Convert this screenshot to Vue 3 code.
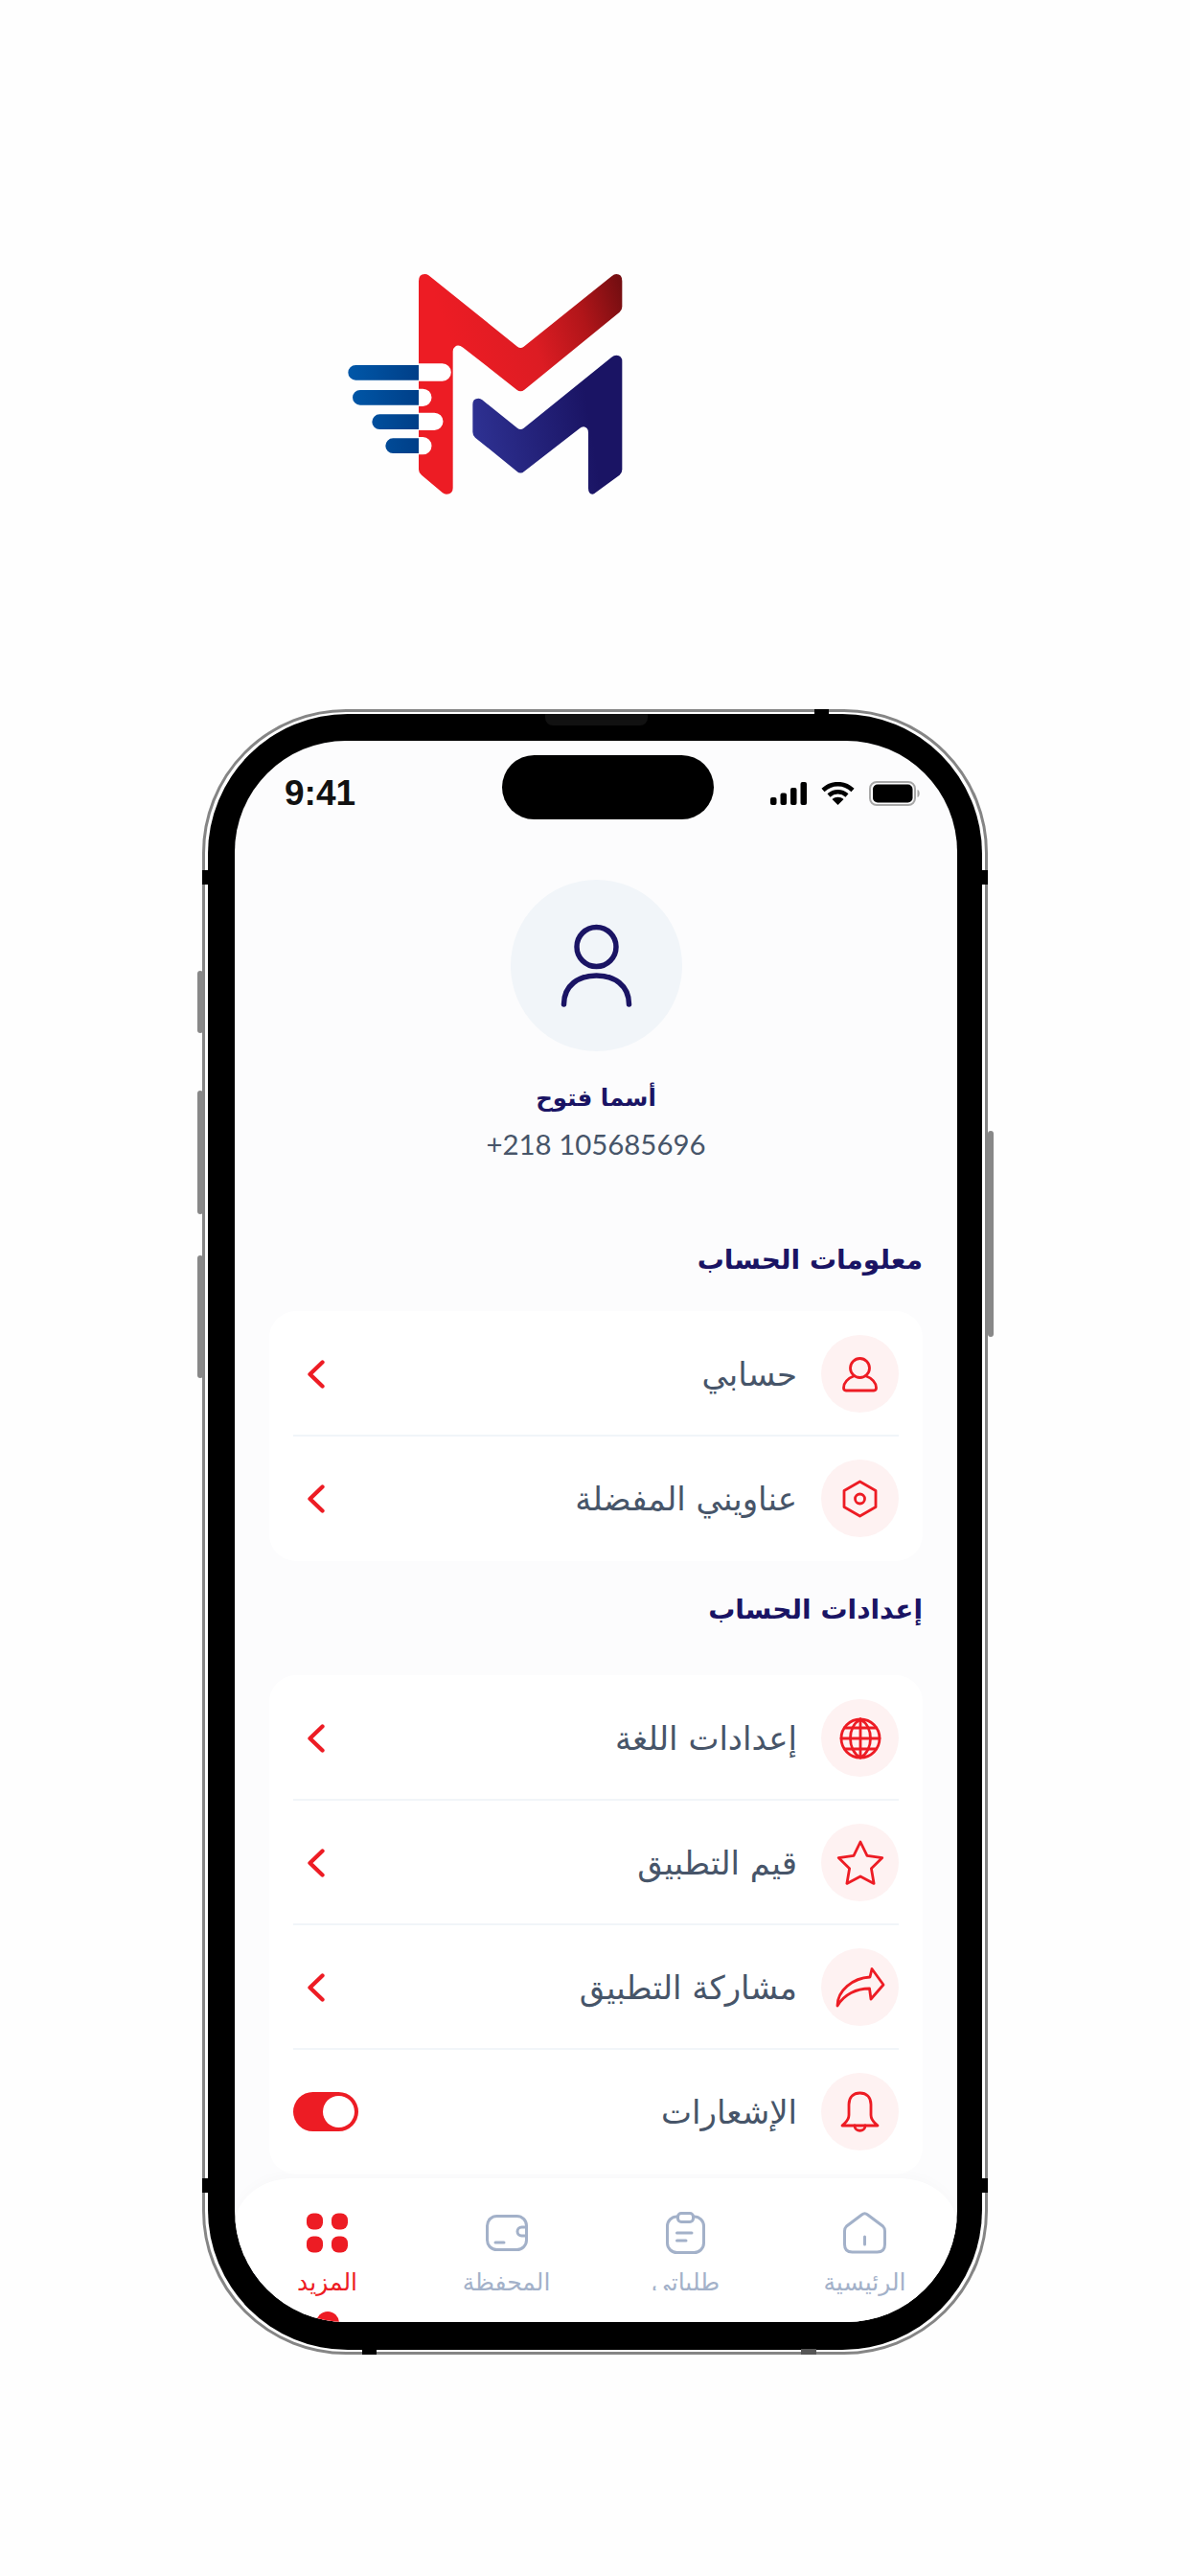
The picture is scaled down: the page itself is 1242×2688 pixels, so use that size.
<script setup>
const circle = (x, y, r) => `M${x - r} ${y}a${r} ${r} 0 1 0 ${2 * r} 0a${r} ${r} 0 1 0 ${-2 * r} 0Z`

const icons = {
  user: [circle(40.5, 34.5, 10), 'M47 43C53 45 57.5 50 57.5 55Q57.5 58 55 58H26Q23.5 58 23.5 55C23.5 50 28 45 34 43'],
  place: ['M40.5 23L57 32.5V49.5L40.5 59L24 49.5V32.5Z', circle(40.5, 41, 5)],
  globe: [
    circle(41, 41, 20),
    'M41 21C27 29 27 53 41 61C55 53 55 29 41 21Z',
    'M41 21V61M21 41H61M24.5 30H57.5M24.5 52H57.5',
  ],
  star: ['M41 19L48 33.3L63.8 35.6L52.4 46.7L55.1 62.4L41 55L26.9 62.4L29.6 46.7L18.2 35.6L34 33.3Z'],
  share: ['M65 38L53 21.5L51 30C33 31 17 44 17 60C24 48 37 42 50.5 42L52 53Z'],
  bell: [
    'M22 55C25 52 29 50 29 44V33C29 25 34 21 40.5 21C47 21 52 25 52 33V44C52 50 56 52 59 55Z',
    'M35 55C35 62 46 62 46 55',
  ],
}

const sections = [
  {
    title: 'معلومات الحساب',
    rows: [
      { label: 'حسابي', icon: 'user' },
      { label: 'عناويني المفضلة', icon: 'place' },
    ],
  },
  {
    title: 'إعدادات الحساب',
    rows: [
      { label: 'إعدادات اللغة', icon: 'globe' },
      { label: 'قيم التطبيق', icon: 'star' },
      { label: 'مشاركة التطبيق', icon: 'share' },
      { label: 'الإشعارات', icon: 'bell', toggle: true },
    ],
  },
]
</script>

<template>
  <div class="page">
    <svg class="logo" viewBox="0 0 1020 810" width="340" height="270">
      <defs>
        <linearGradient id="redM" gradientUnits="userSpaceOnUse" x1="400" y1="330" x2="935" y2="150">
          <stop offset="0" stop-color="#ed1c24" />
          <stop offset="0.45" stop-color="#dc1c23" />
          <stop offset="0.75" stop-color="#b01519" />
          <stop offset="1" stop-color="#750e11" />
        </linearGradient>
        <linearGradient id="blueM" gradientUnits="userSpaceOnUse" x1="460" y1="560" x2="820" y2="500">
          <stop offset="0" stop-color="#2e3192" />
          <stop offset="1" stop-color="#1a1464" />
        </linearGradient>
        <linearGradient id="bar" gradientUnits="userSpaceOnUse" x1="70" y1="0" x2="291" y2="0">
          <stop offset="0" stop-color="#0057a8" />
          <stop offset="1" stop-color="#003f88" />
        </linearGradient>
      </defs>
      <path fill="url(#redM)" d="M291 100Q291 78 310 78Q317 78 322 82L600 305Q610 313 620 305L895 85Q903 78 910 78Q928 78 928 100V180Q928 190 920 197L622 440Q610 450 598 440L430 308Q415 297 405 305Q398 310 398 320V748Q398 767 378 767Q371 767 365 762L300 707Q291 700 291 690Z" />
      <path fill="url(#blueM)" d="M460 485Q460 467 478 467Q485 467 490 472L600 560Q610 568 620 560L895 338Q902 332 910 332Q928 332 928 352V690Q928 700 920 707L845 762Q840 767 835 767Q822 767 822 748V575Q822 558 808 556Q800 556 795 561L622 695Q610 706 598 695L468 590Q460 583 460 572Z" />
      <path fill="#fff" d="M291 358H365A27.500 27.500 0 0 1 365 413H291ZM291 437H304A27.500 27.500 0 0 1 304 492H291ZM291 512H340A27.500 27.500 0 0 1 340 567H291ZM291 588H304A27.500 27.500 0 0 1 304 643H291Z" />
      <path fill="url(#bar)" d="M291 363H93.500A23.500 23.500 0 0 0 93.500 410H291ZM291 441H107.500A23.500 23.500 0 0 0 107.500 488H291ZM291 517H168.500A23.500 23.500 0 0 0 168.500 564H291ZM291 592H210.500A23.500 23.500 0 0 0 210.500 639H291Z" />
    </svg>

    <div class="phone">
      <i class="side vol-a"></i>
      <i class="side vol-b"></i>
      <i class="side vol-c"></i>
      <i class="side power"></i>
      <i class="notch n-lt"></i>
      <i class="notch n-rt"></i>
      <i class="notch n-lb"></i>
      <i class="notch n-rb"></i>
      <i class="notch n-top"></i>
      <i class="notch n-bot1"></i>
      <i class="notch n-bot2"></i>
      <i class="speaker"></i>

      <div class="bezel">
        <div class="screen">
          <div class="island"></div>

          <div class="status">
            <span class="time">9:41</span>
            <div class="status-icons">
              <svg width="38" height="24" viewBox="0 0 38 24" fill="#000">
                <rect x="0" y="16" width="6.500" height="8" rx="2" />
                <rect x="10.500" y="11.500" width="6.500" height="12.500" rx="2" />
                <rect x="21" y="6" width="6.500" height="18" rx="2" />
                <rect x="31.500" y="0" width="6.500" height="24" rx="2" />
              </svg>
              <svg width="35" height="24" viewBox="0 0 35 24" fill="none" stroke="#000" stroke-width="4.500">
                <path d="M2 8.500C11 0 24 0 33 8.500" />
                <path d="M8 14C13.500 9 21.500 9 27 14" />
                <path d="M17.500 24L11.500 18C15 15 20 15 23.500 18Z" fill="#000" stroke="none" />
              </svg>
              <svg width="55" height="26" viewBox="0 0 55 26">
                <rect x="1" y="1" width="47" height="24" rx="7" fill="none" stroke="#a8a8a8" stroke-width="2" />
                <rect x="4" y="3.500" width="41.500" height="19" rx="5" fill="#000" />
                <path d="M50.500 9C53.500 10 53.500 16 50.500 17Z" fill="#a8a8a8" />
              </svg>
            </div>
          </div>

          <div class="profile">
            <div class="avatar">
              <svg width="179" height="179" viewBox="0 0 179 179" fill="none" stroke="#1a1464" stroke-width="5.500" stroke-linecap="round">
                <circle cx="89.500" cy="70" r="20.500" />
                <path d="M55.500 130C55.500 110 71 100 89.500 100C108 100 123.500 110 123.500 130" />
              </svg>
            </div>
            <div class="name">أسما فتوح</div>
            <div class="tel">+218 105685696</div>
          </div>

          <section v-for="section in sections" :key="section.title" class="section">
            <h2 class="section-title">{{ section.title }}</h2>
            <div class="card">
              <div v-for="row in section.rows" :key="row.label" class="row">
                <div class="row-icon">
                  <svg width="81" height="81" viewBox="0 0 81 81" fill="none" stroke="#ed1c24" stroke-width="2.800" stroke-linejoin="round" stroke-linecap="round">
                    <path v-for="d in icons[row.icon]" :key="d" :d="d" />
                  </svg>
                </div>
                <span class="row-label">{{ row.label }}</span>
                <div v-if="row.toggle" class="toggle"><i></i></div>
                <svg v-else class="chevron" width="18" height="30" viewBox="0 0 18 30" fill="none" stroke="#ed1c24" stroke-width="4.300" stroke-linecap="round" stroke-linejoin="round">
                  <path d="M15.500 2.500L2.500 15L15.500 27.500" />
                </svg>
              </div>
            </div>
          </section>

          <nav class="nav">
            <div class="tab">
              <svg class="tab-icon" width="45" height="44" viewBox="0 0 45 44" fill="none" stroke="#a3b1c9" stroke-width="3" stroke-linecap="round" stroke-linejoin="round">
                <path d="M19.500 3L3.500 15Q1.500 17 1.500 20V34Q1.500 42 9.500 42H35.500Q43.500 42 43.500 34V20Q43.500 17 41.500 15L25.500 3Q22.500 .5 19.500 3Z" />
                <path d="M22.500 26V34" />
              </svg>
              <span class="tab-label">الرئيسية</span>
            </div>
            <div class="tab">
              <svg class="tab-icon" width="41" height="44" viewBox="0 0 41 44" fill="none" stroke="#a3b1c9" stroke-width="3" stroke-linecap="round" stroke-linejoin="round">
                <rect x="1.500" y="5" width="38" height="37.500" rx="10" />
                <rect x="12.500" y="1.500" width="16" height="9" rx="3.500" fill="#fff" />
                <path d="M11.500 22H27M11.500 30H21" />
              </svg>
              <span class="tab-label clipped">طلباتي</span>
            </div>
            <div class="tab">
              <svg class="tab-icon wallet" width="44" height="38" viewBox="0 0 44 38" fill="none" stroke="#a3b1c9" stroke-width="3" stroke-linecap="round" stroke-linejoin="round">
                <rect x="1.500" y="1.500" width="41" height="35" rx="10" />
                <path d="M42 13H37.500A4.500 4.500 0 0 0 37.500 22H42" />
                <path d="M10 29H19" />
              </svg>
              <span class="tab-label">المحفظة</span>
            </div>
            <div class="tab active">
              <svg class="tab-icon" width="43" height="41" viewBox="0 0 43 41" fill="#ed1c24">
                <rect x="0" y="0" width="17" height="17" rx="7" />
                <rect x="26" y="0" width="17" height="17" rx="7" />
                <rect x="0" y="24" width="17" height="17" rx="7" />
                <rect x="26" y="24" width="17" height="17" rx="7" />
              </svg>
              <span class="tab-label">المزيد</span>
              <i class="dot"></i>
            </div>
          </nav>
        </div>
      </div>
    </div>
  </div>
</template>

<style>
html, body { margin: 0; background: #fefefe; }
</style>

<style scoped>
.page {
  width: 1242px;
  height: 2688px;
  padding-top: 260px;
  box-sizing: border-box;
  background: #fefefe;
  overflow: hidden;
  font-family: "DejaVu Sans", sans-serif;
}
.logo { display: block; margin-left: 340px; }

.phone {
  position: relative;
  box-sizing: border-box;
  width: 820px;
  height: 1717px;
  margin: 210px 0 0 211px;
  padding: 2px 3px;
  border: 3px solid #858585;
  border-radius: 150px;
  background: #fff;
}
.bezel {
  box-sizing: border-box;
  height: 100%;
  padding: 28px 26px 29px 28px;
  background: #000;
  border-radius: 146px;
}
.screen {
  position: relative;
  height: 100%;
  overflow: hidden;
  background: #fcfcfd;
  border-radius: 116px;
}
.side { position: absolute; background: #888; border-radius: 3px; }
.vol-a { left: -8px; top: 270px; width: 6px; height: 65px; }
.vol-b { left: -8px; top: 395px; width: 6px; height: 129px; }
.vol-c { left: -8px; top: 567px; width: 6px; height: 128px; }
.power { right: -9px; top: 437px; width: 6px; height: 215px; }
.notch { position: absolute; background: #000; }
.n-lt, .n-rt { top: 165px; width: 6px; height: 15px; }
.n-lb, .n-rb { top: 1530px; width: 6px; height: 15px; }
.n-lt, .n-lb { left: -3px; }
.n-rt, .n-rb { right: -3px; }
.n-top { top: -3px; left: 636px; width: 15px; height: 6px; }
.n-bot1 { bottom: -3px; left: 164px; width: 15px; height: 6px; }
.n-bot2 { bottom: -3px; left: 622px; width: 16px; height: 6px; background: #555; }
.speaker {
  position: absolute;
  z-index: 1;
  top: 2px;
  left: 355px;
  width: 107px;
  height: 12px;
  background: #111;
  border-radius: 0 0 8px 8px;
}

.island {
  position: absolute;
  top: 15px;
  left: 279px;
  width: 221px;
  height: 67px;
  background: #000;
  border-radius: 34px;
}
.status {
  display: flex;
  align-items: center;
  justify-content: space-between;
  height: 110px;
  padding: 0 37px 0 52px;
}
.time {
  font-family: "Liberation Sans", sans-serif;
  font-size: 37px;
  font-weight: 700;
  color: #111;
}
.status-icons { display: flex; align-items: center; gap: 15px; }

.profile {
  display: flex;
  flex-direction: column;
  align-items: center;
  margin-top: 35px;
}
.avatar {
  width: 179px;
  height: 179px;
  background: #f1f5f9;
  border-radius: 50%;
}
.avatar svg { display: block; }
.name {
  margin-top: 29px;
  font-size: 24.500px;
  line-height: 40px;
  font-weight: 700;
  color: #1a1464;
  direction: rtl;
}
.tel {
  margin-top: 8px;
  font-family: Lato, sans-serif;
  font-size: 29.400px;
  line-height: 40px;
  color: #475569;
}

.section { margin: 81px 36px 0; direction: rtl; }
.section + .section { margin-top: 31px; }
.section-title {
  margin: 0;
  font-size: 28px;
  line-height: 40px;
  font-weight: 700;
  color: #1a1464;
}
.card {
  margin-top: 33px;
  padding: 25px;
  background: #fff;
  border-radius: 28px;
}
.section + .section .card { margin-top: 48px; }
.row { display: flex; align-items: center; gap: 25px; }
.row + .row {
  margin-top: 23px;
  padding-top: 24px;
  border-top: 2px solid #f1f5f9;
}
.row-icon {
  flex: none;
  width: 81px;
  height: 81px;
  background: #fef2f2;
  border-radius: 50%;
}
.row-icon svg { display: block; }
.row-label {
  flex: 1;
  font-size: 34px;
  line-height: 40px;
  color: #475569;
}
.chevron { flex: none; margin-left: 15px; }
.toggle {
  position: relative;
  flex: none;
  width: 68px;
  height: 41px;
  background: #ed1c24;
  border-radius: 21px;
}
.toggle i {
  position: absolute;
  top: 4px;
  right: 4px;
  width: 33px;
  height: 33px;
  background: #fff;
  border-radius: 50%;
}

.nav {
  position: absolute;
  left: 0;
  right: 0;
  bottom: 0;
  display: grid;
  grid-template-columns: repeat(4, 1fr);
  height: 150px;
  padding: 0 3px;
  direction: rtl;
  background: #fff;
  border-radius: 60px 60px 0 0 / 50px 50px 0 0;
  box-shadow: 0 -3px 14px rgba(30, 41, 59, 0.02);
}
.tab {
  position: relative;
  display: flex;
  flex-direction: column;
  align-items: center;
  padding-top: 35px;
}
.tab-icon { display: block; flex: none; height: 44px; }
.tab-label {
  margin-top: 14px;
  height: 32px;
  font-size: 25px;
  line-height: 32px;
  color: #a3b1c9;
}
.tab-label.clipped { height: 24px; overflow: hidden; }
.active .tab-label { color: #ed1c24; }
.dot {
  position: absolute;
  top: 139px;
  left: 50%;
  width: 24px;
  height: 24px;
  margin-left: -12px;
  background: #ed1c24;
  border-radius: 50%;
}
</style>
